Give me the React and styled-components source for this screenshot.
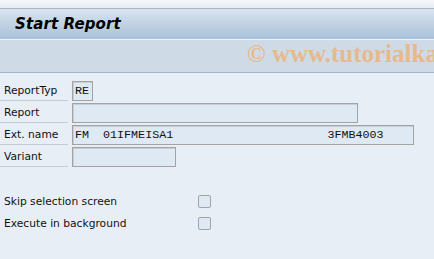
import React from "react";
import styled, { createGlobalStyle } from "styled-components";

const GlobalStyle = createGlobalStyle`
  html, body {
    margin: 0;
    padding: 0;
    background: #e8eef5;
  }
  body {
    font-family: "DejaVu Sans", Verdana, sans-serif;
  }
`;

const Screen = styled.div`
  width: 434px;
  height: 259px;
  overflow: hidden;
  background: #e8eef5;
  display: flex;
  flex-direction: column;
`;

const TopStrip = styled.div`
  height: 8px;
  background: linear-gradient(#f6f8fb, #e6ebf1);
  border-bottom: 1px solid #a9b6c6;
`;

const TitleBar = styled.div`
  height: 30px;
  display: flex;
  align-items: center;
  padding-left: 15px;
  background: linear-gradient(#d9e4ef, #a9c1d9);
  border-bottom: 1px solid #edf2f7;
  h1 {
    margin: 0;
    font-family: "DejaVu Sans", Verdana, sans-serif;
    font-weight: bold;
    font-style: italic;
    font-size: 15px;
    color: #000;
    letter-spacing: 0.1px;
  }
`;

const Toolbar = styled.div`
  height: 33px;
  box-sizing: border-box;
  padding: 0 0 5px 247px;
  background: #cedbe7;
  border-bottom: 1px solid #a6b3c2;
  display: flex;
  align-items: center;
  overflow: hidden;
  white-space: nowrap;
`;

const Watermark = styled.span`
  font-family: "Liberation Serif", "Times New Roman", serif;
  font-weight: bold;
  font-size: 25px;
  color: #e8b98c;
`;

const Form = styled.div`
  padding-top: 8px;
  display: flex;
  flex-direction: column;
  gap: 2px;
`;

const Row = styled.div`
  display: flex;
  align-items: stretch;
  height: 20px;
`;

const Label = styled.div`
  width: 64px;
  padding-left: 4px;
  border-bottom: 1px solid #c3cbd4;
  font-size: 10.7px;
  color: #111;
  display: flex;
  align-items: center;
`;

const Field = styled.div`
  margin-left: 4px;
  width: ${(p) => p.$w}px;
  box-sizing: border-box;
  height: 20px;
  border: 1px solid #a3a3a3;
  box-shadow: inset 1px 1px 0 #c7d0d9;
  background: #dfe9f3;
  padding-left: 2px;
  font-family: "Liberation Mono", "Courier New", monospace;
  font-size: 11.7px;
  color: #111;
  white-space: pre;
  display: flex;
  align-items: center;
`;

const Options = styled.div`
  margin-top: 23px;
  display: flex;
  flex-direction: column;
`;

const CheckRow = styled.div`
  height: 22px;
  display: flex;
  align-items: center;
`;

const CheckLabel = styled.span`
  width: 194px;
  padding-left: 4px;
  font-size: 10.7px;
  color: #111;
`;

const Box = styled.span`
  width: 13px;
  height: 13px;
  box-sizing: border-box;
  border: 1px solid #a3a3a3;
  border-radius: 2px;
  background: #dfe9f3;
`;

const fields = [
  { label: "ReportTyp", w: 21, value: "RE" },
  { label: "Report", w: 286, value: "" },
  {
    label: "Ext. name",
    w: 342,
    value: "FM  01IFMEISA1" + " ".repeat(22) + "3FMB4003",
  },
  { label: "Variant", w: 104, value: "" },
];

export default function App() {
  return (
    <Screen>
      <GlobalStyle />
      <TopStrip />
      <TitleBar>
        <h1>Start Report</h1>
      </TitleBar>
      <Toolbar>
        <Watermark>© www.tutorialkart.com</Watermark>
      </Toolbar>
      <Form>
        {fields.map((f) => (
          <Row key={f.label}>
            <Label>{f.label}</Label>
            <Field $w={f.w}>{f.value}</Field>
          </Row>
        ))}
      </Form>
      <Options>
        <CheckRow>
          <CheckLabel>Skip selection screen</CheckLabel>
          <Box />
        </CheckRow>
        <CheckRow>
          <CheckLabel>Execute in background</CheckLabel>
          <Box />
        </CheckRow>
      </Options>
    </Screen>
  );
}
